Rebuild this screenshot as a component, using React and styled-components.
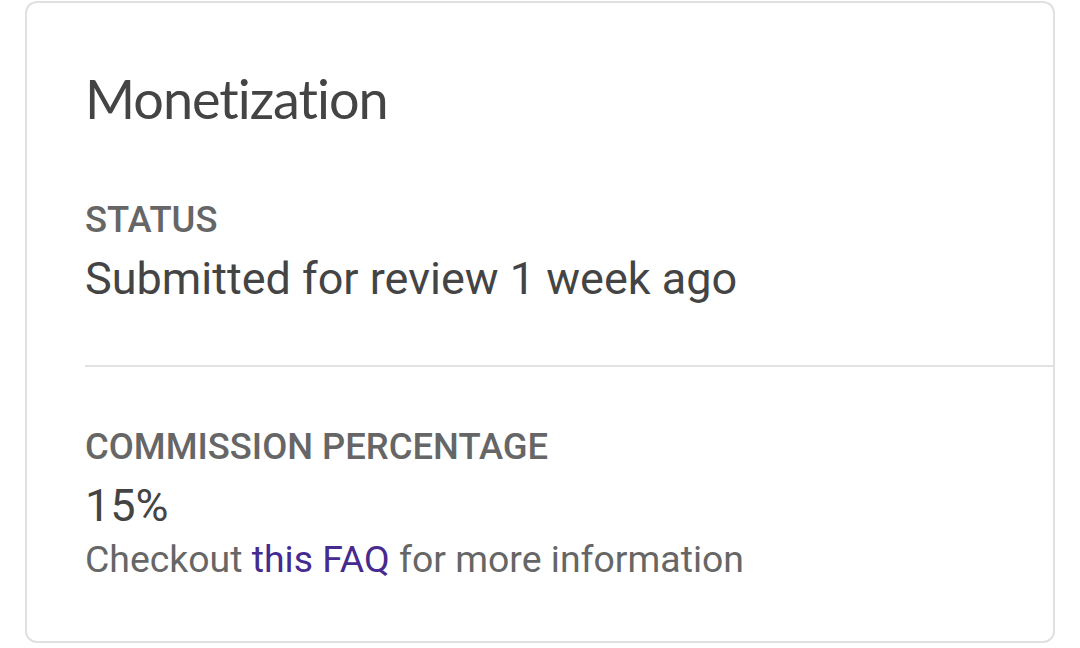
import React from "react";
import styled, { createGlobalStyle } from "styled-components";

const Global = createGlobalStyle`
  html, body { margin: 0; padding: 0; background: #ffffff; }
  body { font-family: Roboto, "Liberation Sans", sans-serif; }
`;

const Page = styled.div`
  padding: 1px 0 0 25px;
  width: 1080px;
  height: 648px;
  box-sizing: border-box;
`;

const Card = styled.section`
  width: 1030px;
  height: 642px;
  box-sizing: border-box;
  border: 2px solid #e0e0e0;
  border-radius: 12px;
  padding: 69px 0 0 58px;
  background: #fff;
`;

const Title = styled.h1`
  margin: 0;
  font-family: Lato, "Open Sans", sans-serif;
  font-weight: 400;
  font-size: 54px;
  line-height: 54px;
  letter-spacing: -1px;
  color: #444;
`;

const Section = styled.div`
  padding-top: ${(p) => p.$top}px;
`;

const Label = styled.div`
  font-family: Roboto, sans-serif;
  font-weight: 500;
  font-size: 36.4px;
  line-height: 36px;
  color: #666;
  text-transform: uppercase;
`;

const Value = styled.div`
  font-family: Roboto, sans-serif;
  font-weight: 400;
  font-size: 45px;
  line-height: 45px;
  color: #444;
  margin-top: ${(p) => p.$gap}px;
`;

const Divider = styled.hr`
  margin: 64px 0 0 0;
  border: 0;
  height: 2px;
  background: #e2e2e2;
`;

const Helper = styled.p`
  margin: 13px 0 0 0;
  font-family: Roboto, sans-serif;
  font-size: 37.4px;
  line-height: 37px;
  color: #666;
`;

const Link = styled.a`
  color: #452a8f;
  text-decoration: none;
`;

export default function App() {
  return (
    <>
      <Global />
      <Page>
        <Card>
          <Title>Monetization</Title>
          <Section $top={76}>
            <Label>Status</Label>
            <Value $gap={18}>Submitted for review 1 week ago</Value>
          </Section>
          <Divider />
          <Section $top={62}>
            <Label>Commission percentage</Label>
            <Value $gap={18}>15%</Value>
            <Helper>
              Checkout <Link href="#">this FAQ</Link> for more information
            </Helper>
          </Section>
        </Card>
      </Page>
    </>
  );
}
